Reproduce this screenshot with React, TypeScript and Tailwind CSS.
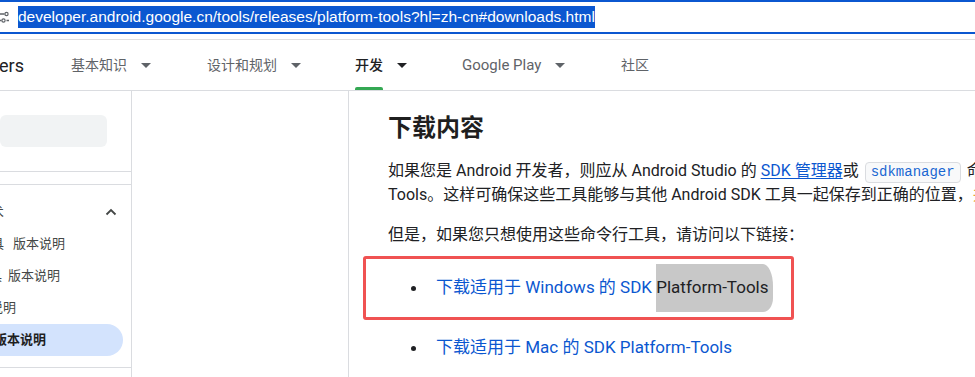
const Caret = ({ dark }: { dark?: boolean }) => (
  <svg width="10" height="5" viewBox="0 0 10 5" className="ml-[14px] shrink-0">
    <path d="M0 0h10L5 5z" fill={dark ? "#202124" : "#5f6368"} />
  </svg>
);

const NavItem = ({ label, width, active, caret = true, latin }: any) => (
  <div className={`flex h-full items-center shrink-0 ${width}`}>
    <span className={`relative flex h-full items-center ${latin ? "text-[15px]" : ""} ${active ? "font-medium text-[#202124]" : ""}`}>
      {label}
      {active && <span className="absolute bottom-0 left-0 right-0 h-[3px] rounded-t-[2px] bg-[#34a853]" />}
    </span>
    {caret && <Caret dark={active} />}
  </div>
);

export default function App() {
  return (
    <div className="w-[975px] h-[377px] overflow-hidden bg-white font-['Roboto','Noto_Sans_CJK_SC',sans-serif] text-[#202124]">
      {/* address bar */}
      <div className="h-[34px] border-y-2 border-[#0b57d0] flex items-center">
        <svg width="9" height="12" viewBox="0 0 9 12" className="shrink-0">
          <path d="M0 3h4.5M6.5 9.5H9" stroke="#5f6368" strokeWidth="1.4" />
          <circle cx="6.5" cy="3" r="1.6" fill="none" stroke="#5f6368" strokeWidth="1.2" />
          <circle cx="3.5" cy="9.5" r="1.6" fill="none" stroke="#5f6368" strokeWidth="1.2" />
          <path d="M0 9.5h1.5" stroke="#5f6368" strokeWidth="1.4" />
        </svg>
        <span className="ml-[9px] bg-[#0b57d0] text-white text-[15.5px] leading-[22px] font-['Liberation_Sans',Arial,sans-serif] whitespace-nowrap">
          developer.android.google.cn/tools/releases/platform-tools?hl=zh-cn#downloads.html
        </span>
      </div>
      <div className="h-[6px] border-b border-[#e0e0e0]" />

      {/* site header */}
      <div className="h-[51px] border-b border-[#dadce0] flex text-[14px] text-[#5f6368] whitespace-nowrap">
        <div className="w-[71px] shrink-0 flex items-center">
          <span className="-ml-[1px] text-[18px] text-[#202124]">ers</span>
        </div>
        <NavItem label="基本知识" width="w-[136px]" />
        <NavItem label="设计和规划" width="w-[148px]" />
        <NavItem label="开发" width="w-[107px]" active />
        <NavItem label="Google Play" width="w-[159px]" latin />
        <NavItem label="社区" width="w-[60px]" caret={false} />
      </div>

      <div className="flex h-[286px]">
        {/* left nav */}
        <div className="w-[132px] shrink-0 border-r border-[#dadce0] overflow-hidden text-[13px] text-[#444746] whitespace-nowrap">
          <div className="mt-[24px] h-[32px] w-[107px] rounded-[6px] bg-[#f1f3f4]" />
          <div className="mt-[24px] h-[14px] border-y border-[#dadce0]" />
          <div className="mt-[11px] h-[32px] flex items-center justify-between pr-[14px]">
            <span className="-ml-[10px] text-[14px]">术</span>
            <svg width="12" height="8" viewBox="0 0 12 8">
              <path d="M1.5 6.5L6 2l4.5 4.5" fill="none" stroke="#444746" strokeWidth="1.8" />
            </svg>
          </div>
          <div className="h-[32px] flex items-center">
            <span className="-ml-[9px]">具</span>
            <span className="ml-[9px]">版本说明</span>
          </div>
          <div className="h-[32px] flex items-center">
            <span className="-ml-[11px]">具</span>
            <span className="ml-[6px]">版本说明</span>
          </div>
          <div className="h-[32px] flex items-center">
            <span className="-ml-[10px]">说明</span>
          </div>
          <div className="h-[32px] w-[123px] flex items-center rounded-r-full bg-[#d3e3fd] font-bold text-[#1f1f1f]">
            <span className="-ml-[6px]">版本说明</span>
          </div>
          <div className="mt-[11px] border-t border-[#dadce0]" />
        </div>

        <div className="w-[217px] shrink-0 border-r border-[#dadce0]" />

        {/* main content */}
        <div className="flex-1 min-w-0 overflow-hidden pl-[39px] whitespace-nowrap">
          <h2 className="mt-[21px] text-[24px] leading-[32px] font-bold text-[#1f1f1f]">下载内容</h2>
          <p className="mt-[15px] text-[16px] leading-[24px]">
            如果您是 Android 开发者，则应从 Android Studio 的{" "}
            <a className="text-[#0b57d0] underline underline-offset-2">SDK 管理器</a>或
            <code className="mx-[6px] inline-block px-[5px] leading-[19px] rounded-[4px] border border-[#dadce0] bg-[#f8f9fa] text-[14px] text-[#1967d2] font-['Liberation_Mono',monospace]">
              sdkmanager
            </code>
            命令行工具中获取 Platform-
            <br />
            Tools。这样可确保这些工具能够与其他 Android SDK 工具一起保存到正确的位置，
            <span className="text-[#e8a33c]">并</span>便于更新。
          </p>
          <p className="mt-[16px] text-[16px] leading-[24px]">但是，如果您只想使用这些命令行工具，请访问以下链接：</p>

          <div className="mt-[9px] -ml-[25px] w-[431px] h-[64px] border-[3px] border-[#f05252] rounded-[3px] flex items-center pl-[45px] text-[17px]">
            <span className="w-[5px] h-[5px] rounded-full bg-[#202124] shrink-0" />
            <span className="ml-[20px] text-[#0b57d0] whitespace-pre">下载适用于 Windows 的 SDK </span>
            <span className="h-[48px] flex items-center bg-[#c8c8c8] rounded-tr-[10px_22px] rounded-br-[10px_14px] pr-[4px]">
              Platform-Tools
            </span>
          </div>

          <div className="mt-[16px] h-[24px] flex items-center text-[17px]">
            <span className="ml-[23px] w-[5px] h-[5px] rounded-full bg-[#202124] shrink-0" />
            <span className="ml-[20px] text-[#0b57d0]">下载适用于 Mac 的 SDK Platform-Tools</span>
          </div>
        </div>
      </div>
    </div>
  );
}
